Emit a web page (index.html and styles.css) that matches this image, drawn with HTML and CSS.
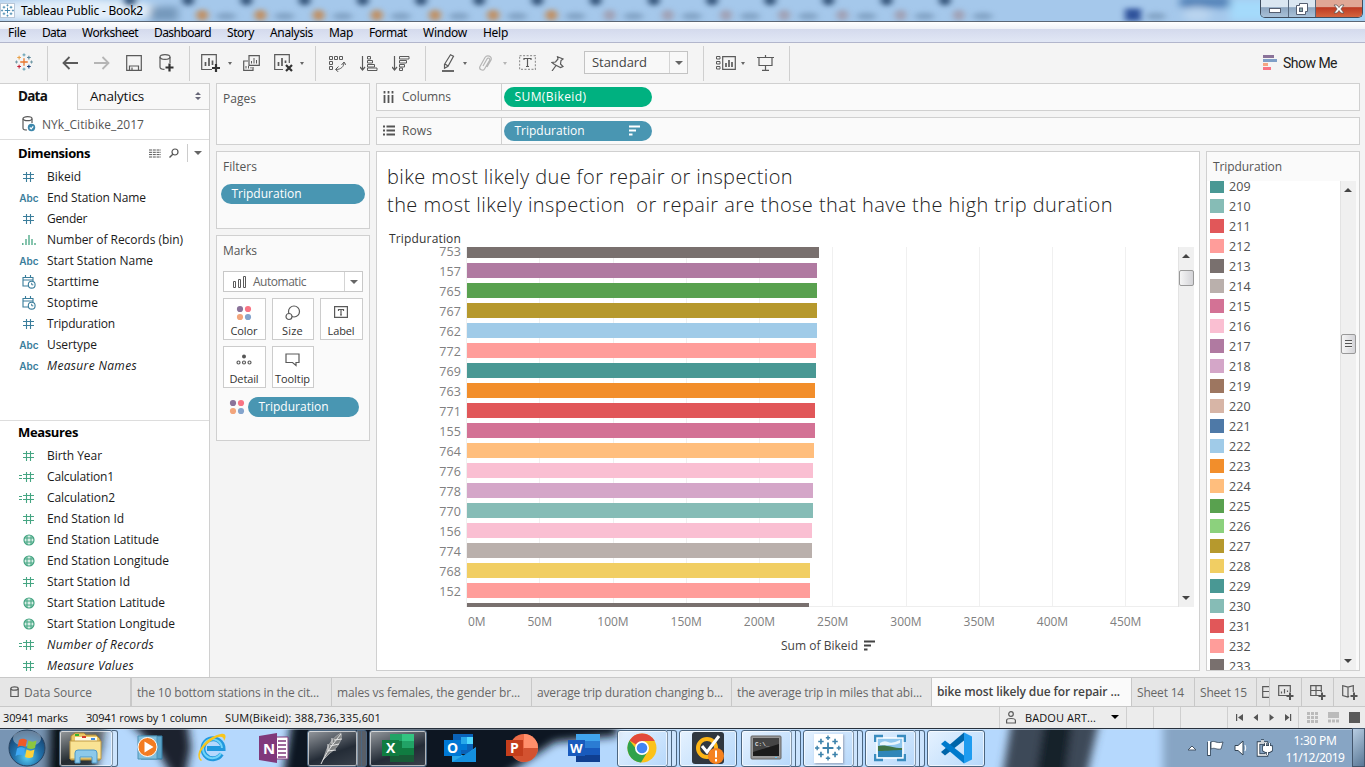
FILE: index.html
```html
<!DOCTYPE html>
<html lang="en">
<head>
<meta charset="utf-8">
<title>Tableau Public - Book2</title>
<link rel="stylesheet" href="styles.css">
</head>
<body>
<svg class="defs" width="0" height="0">
  <symbol id="plusmark" viewBox="0 0 24 24"><g fill="none">
    <path d="M12 7v10M7 12h10" stroke="var(--c1)" stroke-width="1.700"/>
    <path d="M5.500 3.500v5M3 6h5" stroke="var(--c2)" stroke-width="1.500"/><path d="M18.500 3.500v5M16 6h5" stroke="var(--c3)" stroke-width="1.500"/>
    <path d="M5.500 15.500v5M3 18h5" stroke="var(--c4)" stroke-width="1.500"/><path d="M18.500 15.500v5M16 18h5" stroke="var(--c5)" stroke-width="1.500"/>
    <path d="M12 .5v4M10 2.500h4M12 19.500v4M10 21.500h4" stroke="var(--c6)" stroke-width="1.300"/><path d="M2 10v4M0 12h4M22 10v4M20 12h4" stroke="var(--c7)" stroke-width="1.300"/>
  </g></symbol>
  <symbol id="hash" viewBox="0 0 12 12"><path d="M3.500 1v10M7.500 1v10M0 3.500h11M0 7.500h11" fill="none" stroke="currentColor" stroke-width="1.100"/></symbol>
  <symbol id="calc" viewBox="0 0 16 12"><path d="M7.500 1v10M11.500 1v10M4 3.500h11M4 7.500h11M0 4.500h3M0 7.500h3" fill="none" stroke="currentColor" stroke-width="1.100"/></symbol>
  <symbol id="bin" viewBox="0 0 14 12"><path d="M.8 9v2M4 5v6M7 1v10M10 5v6M13 9v2" fill="none" stroke="currentColor" stroke-width="1.300"/></symbol>
  <symbol id="cal" viewBox="0 0 14 14"><path d="M6 11H1V2.500h10V6M1 5h10M3.500 0v3M8.500 0v3" fill="none" stroke="currentColor" stroke-width="1.100"/><circle cx="9.700" cy="9.700" r="3.400" fill="#fff" stroke="currentColor" stroke-width="1.100"/><path d="M9.700 7.800v2h1.600" fill="none" stroke="currentColor"/></symbol>
  <symbol id="globe" viewBox="0 0 12 12"><circle cx="6" cy="6" r="5" fill="#d9eee6" stroke="currentColor" stroke-width="1.200"/><path d="M4 1.500v9M8 1.500v9M1 4h10M1 8h10" fill="none" stroke="currentColor"/></symbol>
  <symbol id="sortbars" viewBox="0 0 11 11"><path d="M0 1.500h11M0 5.500h7M0 9.500h3.500" stroke="currentColor" stroke-width="2"/></symbol>
  <symbol id="dots" viewBox="0 0 16 16"><circle cx="4" cy="4" r="3.100" fill="#8a7299"/><circle cx="12" cy="4" r="3.100" fill="#f87484"/><circle cx="4" cy="12" r="3.100" fill="#f2a57c"/><circle cx="12" cy="12" r="3.100" fill="#84a4cc"/></symbol>
</svg>

<header class="titlebar">
  <svg class="glass" viewBox="0 0 1365 22" preserveAspectRatio="none">
    <defs><filter id="soft" x="-20%" y="-50%" width="140%" height="200%"><feGaussianBlur stdDeviation="4"/></filter></defs>
    <rect width="1365" height="22" fill="#a5c8eb"/>
    <g filter="url(#soft)">
      <ellipse cx="70" cy="11" rx="95" ry="12" fill="#e3effa"/><rect x="150" y="7" width="28" height="15" fill="#7498bb"/>
      <rect x="1180" y="-4" width="50" height="12" fill="#5382b8"/><ellipse cx="1197" cy="15" rx="14" ry="8" fill="#b9d4ef"/>
      <rect x="1230" width="135" height="22" fill="#a4dafb"/>
    </g>
    <g id="tabsblur"></g>
  </svg>
  <div class="app-icon"><svg width="13" height="13"><use href="#plusmark"/></svg></div>
  <span class="app-title" data-w="122">Tableau Public - Book2</span>
  <div class="win-buttons">
    <span class="wb min"><svg width="12" height="5"><rect x=".5" y=".5" width="11" height="4" fill="#fff" stroke="#555e70"/></svg></span>
    <span class="wb max"><svg width="12" height="12"><path d="M3.500.5h8v8h-2v3h-9v-9h3z" fill="#fff" stroke="#555e70"/><rect x="3.500" y="5" width="3" height="3.500" fill="#8aa" stroke="#555e70"/></svg></span>
    <span class="wb close"><svg width="12" height="10"><path d="M1 1h3l2 2.500L8 1h3L7.800 5 11 9H8L6 6.500 4 9H1l3.200-4z" fill="#fff" stroke="#555" stroke-width=".7"/></svg></span>
  </div>
</header>

<nav class="menubar">
  <span data-w="18">File</span><span data-w="24">Data</span><span data-w="56">Worksheet</span><span data-w="57">Dashboard</span><span data-w="27">Story</span><span data-w="43">Analysis</span><span data-w="24">Map</span><span data-w="38">Format</span><span data-w="44">Window</span><span data-w="25">Help</span>
</nav>

<div class="toolbar">
  <div class="tg g1"><svg class="logo" width="18" height="18"><use href="#plusmark"/></svg></div>
  <div class="tg g2">
    <i><svg width="16" height="14" class="ln2"><path d="M1 7h15M7.500 1L1.500 7l6 6"/></svg></i>
    <i><svg width="16" height="14" class="ln2 dim"><path d="M0 7h15M8.500 1l6 6-6 6"/></svg></i>
    <i><svg width="16" height="16" class="ln"><path d="M.7.7h14.600v14.600H.7zM3.500 15v-4h9v4M6 15v-2.500"/></svg></i>
    <i><svg width="15" height="18" class="ln"><ellipse cx="6" cy="3" rx="5" ry="2.400"/><path d="M1 3v10c0 1.500 2 2.400 4.500 2.400M11 3v6"/><path class="heavy" d="M10.500 9.500v8M6.500 13.500h8"/></svg></i>
  </div>
  <div class="tg g3">
    <i class="w20"><svg width="19" height="18" class="ln"><path d="M11 15.500H.7V.7h14.600V10"/><path class="bars" d="M4.500 12V8M8 12V4M11.500 11V6.500"/><path class="heavy" d="M15 10v8M11 14h8"/></svg></i>
    <i class="w20 caret"></i>
    <i class="w22"><svg width="17" height="16" class="ln"><path d="M6 .7h10.300v9.600H6zM5 6H.7v9.300H10V12"/><path class="thin" d="M8.500 8.500V6M11 8.500V3M13.500 8.500V5M3 13.500V11M5.500 13.500V11M8 13.500v-1.500"/></svg></i>
    <i class="w22 ml10"><svg width="19" height="18" class="ln"><path d="M9 15.500H.7V.7h14.600V9"/><path class="bars" d="M4.500 12V8M8 12V4M11.500 9V6.500"/><path class="heavy" d="M12 11l6 6M18 11l-6 6"/></svg></i>
    <i class="w16 caret"></i>
  </div>
  <div class="tg g4">
    <i><svg width="17" height="17" class="ln"><path class="thin" d="M.5 1.500h3v3h-3zM5.500 1.500h3v3h-3zM10.500 1.500h3v3h-3zM.5 6.500h3v3h-3zM.5 11.500h3v3h-3zM7 14.500c5 0 8-3 8-7M9.500 11.500l-3 3 3 2.500M12.500 10L15 7l2 3"/></svg></i>
    <i><svg width="18" height="15" class="ln"><path d="M2.500 0v14M0 11l2.500 3L5 11"/><path class="thin" d="M7.500.5h3v2.500h-3zM7.500 4.500h5V7h-5zM7.500 8.500h7V11h-7zM7.500 12h9.500v2.500H7.500z"/></svg></i>
    <i><svg width="18" height="15" class="ln"><path d="M2.500 0v14M0 11l2.500 3L5 11"/><path class="thin" d="M7.500.5H17V3H7.500zM7.500 4.500h7V7h-7zM7.500 8.500h5V11h-5zM7.500 12h3v2.500h-3z"/></svg></i>
  </div>
  <div class="tg g5">
    <i class="w24"><svg width="13" height="18" class="ln"><path d="M8.500.8l3 1.500-5.500 10-3.500 2v-4zM3 10l3 2"/><path d="M0 17h12" stroke-width="1.800"/></svg></i>
    <i class="w10 caret"></i>
    <i class="w30"><svg width="13" height="16" class="ln dim"><path d="M4 11l4-7c1-1.800 3.500-.5 2.500 1.500l-5 8.500c-1.500 2.500-6 .5-4.500-2.500l5-9C8 -.5 13.500 1 12 5L8 12"/></svg></i>
    <i class="w10 caret dimc"></i>
    <i class="w34"><svg width="17" height="16" class="ln"><path d="M.6.6h15.800v13.800H.6z" stroke-dasharray="2 1.500" opacity=".6"/><path d="M5 5V3.500h7V5M8.500 3.500v8M7 11.500h3"/></svg></i>
    <i class="w26"><svg width="13" height="15" class="ln"><path d="M6.500.8l5.500 2.200-2 1.500-.5 3.500 2.500 2.500-2.500 1L3.500 8.500 1 6.500 4.500 6 7 3zM5 9.500L1 15"/></svg></i>
    <div class="combo"><span data-w="55">Standard</span><b class="caret big"></b></div>
  </div>
  <div class="tg g6">
    <i class="w24"><svg width="20" height="14" class="ln"><path class="thin" d="M.5.5h3.500V3H.5zM.5 5.500h3.500V8H.5zM.5 10.500h3.500V13H.5z"/><path d="M6.700.7h12.600v12.600H6.700z"/><path class="bars" d="M10 11V7M13 11V4M16 11V6"/></svg></i>
    <i class="w10 caret"></i>
    <i class="w35"><svg width="17" height="16" class="ln"><path d="M0 2.500h17M2 2.500v8h13v-8M8.500 0v2M8.500 11v4M5 15.300h7"/></svg></i>
  </div>
  <div class="showme"><svg width="14" height="15"><path d="M0 0h11v3H0z" fill="#8a7299"/><path d="M0 4h14v3H0z" fill="#7f9fc7"/><path d="M0 8h5v3H0z" fill="#f4a582"/><path d="M0 12h8v3H0z" fill="#f87484"/></svg><span data-w="54">Show Me</span></div>
</div>

<main class="workspace">
  <aside class="datapane">
    <div class="ptabs"><b data-w="29">Data</b><div class="ptab2"><span data-w="54">Analytics</span><svg width="6" height="8"><path d="M3 0l3 3H0zM3 8l3-3H0z" fill="#667"/></svg></div></div>
    <div class="source"><svg width="14" height="16" class="ln"><ellipse cx="5.500" cy="2.700" rx="4.500" ry="2"/><path d="M1 2.700v9.500c0 1 2 1.800 4 1.800M10 2.700V7"/><circle cx="9.500" cy="11.500" r="3.700" fill="#3d87ab" stroke="none"/><path d="M7.800 11.500l1.400 1.400 2-2.500" stroke="#fff"/></svg><span data-w="102">NYk_Citibike_2017</span></div>
    <section class="dims">
      <div class="phead"><b data-w="72">Dimensions</b>
        <svg class="grid-ic" width="12" height="9"><path d="M0 1h12M0 3.300h12M0 5.600h12M0 8h12" stroke="#555" stroke-dasharray="3 .8"/></svg>
        <svg class="find-ic" width="10" height="10" ><circle cx="6" cy="4" r="3" fill="none" stroke="#555" stroke-width="1.200"/><path d="M3.800 6.200L.5 9.500" stroke="#555" stroke-width="1.400"/></svg>
        <span class="hsep"></span><em class="caret big"></em></div>
      <div id="dims"></div>
    </section>
    <section class="meas"><div class="phead"><b data-w="60">Measures</b></div><div id="meas"></div></section>
  </aside>

  <div class="cards">
    <section class="card pages"><h3 data-w="33">Pages</h3></section>
    <section class="card filters"><h3 data-w="34">Filters</h3><div class="pill blue"><span data-w="70">Tripduration</span></div></section>
    <section class="card marks"><h3 data-w="34">Marks</h3>
      <div class="marktype"><svg width="14" height="12" class="ln"><path class="thin" d="M.5 5.500h2v6h-2zM5.500 3.500h2v8h-2zM10.500.5h2v11h-2z"/></svg><span data-w="53">Automatic</span><b class="caret big"></b></div>
      <div class="mgrid">
        <div><svg width="16" height="16"><use href="#dots"/></svg><span data-w="27">Color</span></div>
        <div><svg width="16" height="16" class="ln"><circle cx="9" cy="6.500" r="5.500"/><circle cx="4" cy="11.500" r="3" fill="#fafafa"/></svg><span data-w="21">Size</span></div>
        <div><svg width="14" height="14" class="ln"><path d="M.6 1.600h12.800v10.800H.6zM4.500 6V4.500h5V6M7 4.500v6M6 10h2"/></svg><span data-w="27">Label</span></div>
        <div><svg width="16" height="14" class="ln"><circle cx="8" cy="3.500" r="2" fill="#555" stroke="none"/><circle cx="2.500" cy="9.500" r="1.500"/><circle cx="8" cy="9.500" r="1.500"/><circle cx="13.500" cy="9.500" r="1.500"/></svg><span data-w="29">Detail</span></div>
        <div><svg width="16" height="14" class="ln"><path d="M1 1h13v8.500h-3v3l-3.500-3H1z"/></svg><span data-w="35">Tooltip</span></div>
      </div>
      <div class="encode"><svg width="16" height="16"><use href="#dots"/></svg><div class="pill blue"><span data-w="70">Tripduration</span></div></div>
    </section>
  </div>

  <div class="sheet">
    <div class="shelf"><div class="sname"><svg width="11" height="12"><path d="M1.500 0v2.500M1.500 4v8M5.500 0v2.500M5.500 4v8M9.500 0v2.500M9.500 4v8" stroke="#555" stroke-width="1.800"/></svg><span data-w="49">Columns</span></div><div class="pill green"><span data-w="72">SUM(Bikeid)</span></div></div>
    <div class="shelf"><div class="sname"><svg width="12" height="11"><path d="M0 1.500h2M3.500 1.500H12M0 5.500h2M3.500 5.500H12M0 9.500h2M3.500 9.500H12" stroke="#555" stroke-width="1.800"/></svg><span data-w="30">Rows</span></div><div class="pill blue"><span data-w="70">Tripduration</span><svg width="11" height="11"><use href="#sortbars"/></svg></div></div>
    <div class="views">
      <section class="viz">
        <h1><span data-w="406">bike most likely due for repair or inspection</span><span data-w="726">the most likely inspection&nbsp; or repair are those that have the high trip duration</span></h1>
        <div class="fieldname"><span data-w="72">Tripduration</span></div>
        <div class="plotwrap">
          <div class="plot"><div class="gridlines" id="grid"></div><div class="barrows" id="bars"></div></div>
          <div class="scroll"><s class="up"></s><u class="thumb t1"></u><s class="down"></s></div>
        </div>
        <div class="axis" id="axis"></div>
        <div class="axistitle"><span data-w="77">Sum of Bikeid</span><svg width="11" height="11"><use href="#sortbars"/></svg></div>
      </section>
      <section class="legend">
        <h3 data-w="69">Tripduration</h3>
        <div class="lwrap"><div class="llist" id="legend"></div><div class="scroll"><s class="up"></s><u class="thumb t2"></u><s class="down"></s></div></div>
      </section>
    </div>
  </div>
</main>

<div class="sheettabs">
  <div class="ds"><svg width="9" height="12" class="ln"><ellipse cx="4.500" cy="2.500" rx="3.700" ry="1.700"/><path d="M.8 2.500v8h7.400v-8"/></svg><span data-w="68">Data Source</span></div>
  <div class="t200"><span data-w="182">the 10 bottom stations in the cit...</span></div>
  <div class="t200"><span data-w="183">males vs females, the gender br...</span></div>
  <div class="t200"><span data-w="186">average trip duration changing b...</span></div>
  <div class="t200"><span data-w="185">the average trip in miles that abi...</span></div>
  <div class="t200 active"><span data-w="183">bike most likely due for repair ...</span></div>
  <div class="t63"><span data-w="47">Sheet 14</span></div>
  <div class="t62"><span data-w="47">Sheet 15</span></div>
  <div class="t13"><svg width="12" height="12" class="ln"><path d="M.7.7h11v10.600h-11zM.7 5.500h11"/></svg></div>
  <div class="t32"><svg width="16" height="15" class="ln"><path d="M10 10.500H.7V.7h11.600V7M3.500 8.500V6.500M6.500 8.500V4M9.500 7V5.500"/><path class="heavy2" d="M12 7.500V15M8.500 11h7"/></svg></div>
  <div class="t32"><svg width="16" height="15" class="ln"><path d="M9 10.500H.7V.7h10.600V7M6 .7v9.800M.7 5.500h10.600"/><path class="heavy2" d="M12 7.500V15M8.500 11h7"/></svg></div>
  <div class="t32 last"><svg width="16" height="15" class="ln"><path d="M7 11L6 12 .7 10.500V.7L6 2.200 11.300.7V7M6 2.200V12"/><path class="heavy2" d="M12 7.500V15M8.500 11h7"/></svg></div>
</div>

<div class="status">
  <div class="stext"><span data-w="65">30941 marks</span><span data-w="121">30941 rows by 1 column</span><span data-w="156">SUM(Bikeid): 388,736,335,601</span></div>
  <div class="user"><svg width="10" height="13" class="ln"><circle cx="5" cy="3" r="2.300"/><path d="M.6 12V9.500C.6 8 2 7.500 5 7.500s4.400.5 4.400 2V12z"/></svg><span data-w="71">BADOU ART...</span><b class="caret blk"></b></div>
  <div class="c27"></div><div class="c27"></div><div class="c47"></div>
  <div class="pager"><svg width="60" height="9" viewBox="0 0 60 9"><g fill="#555"><path d="M0 1h1.200v7H0zM7 1v7L2 4.500zM22 1v7l-4.500-3.500zM33.500 1v7L38 4.500zM49 1v7l4.500-3.500zM54 1h1.200v7H54z"/></g></svg></div>
  <div class="modes"><svg width="54" height="11"><path d="M0 1.500h11M0 5.500h11M0 9.500h11" stroke="#bbb" stroke-width="3" stroke-dasharray="3 1"/><path d="M21 0h11v6H21z" fill="#bbb"/><path d="M21 9h11" stroke="#bbb" stroke-width="3" stroke-dasharray="3 1"/><path d="M42 0h11v11H42z" fill="#595959"/></svg></div>
</div>

<footer class="taskbar">
  <svg class="glass" viewBox="0 0 1365 39" preserveAspectRatio="none">
    <defs><filter id="soft3" x="-5%" y="-50%" width="110%" height="200%"><feGaussianBlur stdDeviation="4"/></filter></defs>
    <rect width="1365" height="39" fill="#b5d8fd"/>
    <g filter="url(#soft3)">
      <path d="M-20-10h70v60h-70z" fill="#7895b4"/><path d="M48-10h60l-14 60H46z" fill="#10161f"/>
      <path d="M125-10h62l4 30-6 30h-12l-16-28z" fill="#1b232e"/><path d="M292-10h325v18l-62 6-60 40H282z" fill="#111820"/>
      <path d="M1012-10h88l-14 60h-84z" fill="#3d4958"/><path d="M1045-10h28l-8 60h-30z" fill="#18202b"/>
      <path d="M1163-10h220v60h-220z" fill="#87a5c4"/>
    </g>
    <path d="M0 .5h1365" stroke="#27303c"/><path d="M0 1.500h1365" stroke="#d5e6f7" opacity=".5"/>
  </svg>
  <div class="start"><svg width="38" height="38" viewBox="0 0 38 38"><defs><radialGradient id="orb" cx=".5" cy=".75" r=".7"><stop offset="0" stop-color="#57d0f5"/><stop offset=".5" stop-color="#2173ad"/><stop offset="1" stop-color="#16406c"/></radialGradient></defs><circle cx="19" cy="19" r="18" fill="url(#orb)" stroke="#27425f"/><ellipse cx="19" cy="9.500" rx="14" ry="8" fill="#fff" opacity=".35"/><path d="M11 11c3-2 5-1.500 8 0l-1.500 7c-3-1.700-5-1.500-8 0z" fill="#ef5a28"/><path d="M20.500 11.500c3 1.500 5 1.500 8 0L27 19c-3 1.500-5 1.200-8 0z" fill="#8cc63f"/><path d="M9 19.500c3-2 5-1.500 8 0L15.500 27c-3-1.700-5-1.500-8 0z" fill="#3fa9f5"/><path d="M18.500 20.500c3 1.500 5 1.500 8 0L25 28c-3 1.500-5 1.200-8 0z" fill="#fdd13a"/></svg></div>
  <div class="apps">
    <div class="app stk dark"><i><svg width="34" height="32" viewBox="0 0 34 32"><path d="M2 4l4-3h9l2 2h10l4 4v21H2z" fill="#e9c664" stroke="#a88432"/><path d="M6 5h22v8H6z" fill="#fffbe2"/><path d="M6 2h4v2H6z" fill="#35b52c"/><path d="M13 4h4v2h-4z" fill="#d83b2b"/><path d="M22 6h4v2h-4z" fill="#3f8de0"/><path d="M1 9h31v18H1z" fill="#f9e394" stroke="#c29c46"/><path d="M6 31V21q0-3 3-3h16q3 0 3 3v10h-5v-6H11v6z" fill="#8cc9ea" stroke="#4e99c8"/></svg></i></div>
    <div class="app"><svg width="30" height="28" viewBox="0 0 30 28"><path d="M6 2h21v23H6z" fill="#5ba3c9" stroke="#32789f"/><path d="M3 2h19v23H3z" fill="#83bfdc" stroke="#4e94b7"/><circle cx="12.500" cy="13" r="9.500" fill="#f37b21" stroke="#fff"/><path d="M9.500 7.500v11l9-5.500z" fill="#fff"/></svg></div>
    <div class="app"><svg width="32" height="30" viewBox="0 0 32 30"><path d="M25.500 21A10 10 0 1 1 27 15.500H11" fill="none" stroke="#2199de" stroke-width="5"/><path d="M25 20A9.500 9.500 0 1 1 26 15" fill="none" stroke="#71d3f8" stroke-width="2"/><path d="M5 28C-3 23 8 4 25 1c6-1 5 4 3 7 0-6-6-5-13 0C5 15 1 24 6 27z" fill="#f8c51c"/></svg></div>
    <div class="app"><svg width="30" height="30" viewBox="0 0 30 30"><path d="M17 4h12v22H17z" fill="#fff" stroke="#80397b"/><path d="M19 8h8M19 12h8M19 16h8M19 20h8M19 24h8" stroke="#80397b" stroke-width="1.500"/><path d="M0 3l18-3v30L0 27z" fill="#80397b"/><text x="4" y="21" class="lt" font-size="15">N</text></svg></div>
    <div class="app stk2 dark"><i><svg width="28" height="34" viewBox="0 0 28 34"><path d="M5 29C8 22 9 10 23 2c2 8-5 16-11 20z" fill="#7e8182" stroke="#c9caca" stroke-width=".6"/><path d="M3 33C8 22 14 14 23 3M9 20l9-1M12 15l9-2M16 9l8-1M10 19v-6M14 13V7" stroke="#e6e6e6" fill="none"/></svg></i></div>
    <div class="app full dark"><i><svg width="34" height="30" viewBox="0 0 34 30"><path d="M9 1h24v28H9z" fill="#21a366"/><path d="M9 8h12v14H9z" fill="#107c41"/><path d="M21 1h12v7H21z" fill="#33c481"/><path d="M21 15h12v7H21z" fill="#107c41"/><path d="M9 22h24v7H9z" fill="#185c37"/><path d="M1 7h17v16H1z" fill="#107c41"/><text x="5" y="20" class="lt" font-size="14">X</text></svg></i></div>
    <div class="app"><svg width="34" height="30" viewBox="0 0 34 30"><path d="M10 1h20v20H10z" fill="#0a62b8"/><path d="M18 4h6v7h-6z" fill="#28a8ea"/><path d="M24 4h6v7h-6z" fill="#50d9ff"/><path d="M18 11h6v6h-6z" fill="#0078d4"/><path d="M9 16l12 7 12-9v15H9z" fill="#28a8ea"/><path d="M9 29l24-14v14z" fill="#1490df"/><path d="M1 7h17v16H1z" fill="#0078d4"/><text x="4" y="20" class="lt" font-size="14">O</text></svg></div>
    <div class="app"><svg width="34" height="30" viewBox="0 0 34 30"><circle cx="19" cy="15" r="14" fill="#ed6c47"/><path d="M19 1a14 14 0 0 1 14 14H19z" fill="#ff8f6b"/><path d="M33 15a14 14 0 0 1-26 7l12-7z" fill="#d35230"/><path d="M1 7h17v16H1z" fill="#c43e1c"/><text x="5" y="20" class="lt" font-size="14">P</text></svg></div>
    <div class="app"><svg width="34" height="30" viewBox="0 0 34 30"><path d="M9 1h24v7H9z" fill="#41a5ee"/><path d="M9 8h24v7H9z" fill="#2b7cd3"/><path d="M9 15h24v7H9z" fill="#185abd"/><path d="M9 22h24v7H9z" fill="#103f91"/><path d="M1 7h17v16H1z" fill="#185abd"/><text x="3" y="20" class="lt" font-size="13">W</text></svg></div>
    <div class="app stk2"><i><svg width="30" height="30" viewBox="0 0 30 30"><circle cx="15" cy="15" r="14.500" fill="#fbc21a"/><path d="M15 15L2.500 7.500A14.500 14.500 0 0 1 27.700 8H15z" fill="#e24a3b"/><path d="M2.500 7.500A14.500 14.500 0 0 0 14 29.500L21 18l-6-3-5 2z" fill="#2fa24c"/><circle cx="15" cy="15" r="7" fill="#fff"/><circle cx="15" cy="15" r="5.300" fill="#4285f4"/></svg></i></div>
    <div class="app full"><i><svg width="32" height="32" viewBox="0 0 32 32"><rect width="32" height="32" rx="3" fill="#30373f"/><circle cx="15" cy="16" r="9" fill="none" stroke="#fdb515" stroke-width="4"/><path d="M10 14l5 6L27 4" fill="none" stroke="#fff" stroke-width="3"/><circle cx="24" cy="24" r="8" fill="#f58220"/><path d="M24 18.500v7M24 27v2.500" stroke="#fff" stroke-width="2"/></svg></i></div>
    <div class="app stk2"><i><svg width="32" height="26" viewBox="0 0 32 26"><rect x="1" y="1" width="30" height="23" rx="1" fill="#999" stroke="#666"/><path d="M3 3h26v18H3z" fill="#1b1b1b"/><path d="M3 3h26v6L3 17z" fill="#454545"/><text x="5" y="11" class="mono" font-size="6">C:\_</text><path d="M25 22.500h2" stroke="#57c8ff"/></svg></i></div>
    <div class="app stk2"><i><span class="tile"><svg width="26" height="26"><use href="#plusmark"/></svg></span></i></div>
    <div class="app stk2"><i><svg width="32" height="28" viewBox="0 0 32 28"><path d="M3 4h26v20H3z" fill="#8fc7ee" stroke="#fff" stroke-width="1.500"/><path d="M6 9q4-3 8-1t12-2v3q-6 3-20 2z" fill="#e8f5fd"/><path d="M4 16c8-3 14-1 24-2v9H4z" fill="#2f86b8"/><path d="M4 12c8-2 14 2 24 2v2c-8 0-14 1-24 1z" fill="#3f7446"/><path d="M1 8V2h8M23 2h8v6M31 20v6h-8M9 26H1v-6" fill="none" stroke="#3a8cbf" stroke-width="2.500"/></svg></i></div>
    <div class="app full"><i><svg width="32" height="32" viewBox="0 0 32 32"><path d="M24 .5v8L5 23.500 1 20z" fill="#0065a9"/><path d="M1 12l4-3.500 19 15v8z" fill="#007acc"/><path d="M24 .5l8 4v23l-8 4z" fill="#1f9cf0"/></svg></i></div>
  </div>
  <div class="tray">
    <svg width="90" height="20" viewBox="0 0 90 20"><path d="M2 12h8L6 8z" fill="#fff" stroke="#456"/><path d="M23 4v14" stroke="#345" stroke-width="3.500"/><path d="M23 3v14" stroke="#fff" stroke-width="2"/><path d="M25 4c4-2 5 2 12 0l-2 7c-5 1-6-2-10 0z" fill="#fff" stroke="#345" stroke-width=".8"/><path d="M49 7.500h3l5-4.500v14l-5-4.500h-3z" fill="#fff" stroke="#345"/><path d="M59 7q1.500 3 0 6" fill="none" stroke="#fff"/><g fill="none"><path d="M72.500 5h8v12h-8zM75 3h3" stroke="#345" stroke-width="3.500"/><path d="M72.500 5h8v12h-8zM75 3h3" stroke="#fff" stroke-width="1.700"/><path d="M77.500 8.500h8v4q-4 3-8 0zM79.500 5v3M83.500 5v3M81.500 14v3" fill="#fff" stroke="#345" stroke-width="2.500"/><path d="M77.500 8.500h8v4q-4 3-8 0zM79.500 5v3M83.500 5v3M81.500 14v3" fill="#fff" stroke="#fff"/></g></svg>
    <div class="clock"><span data-w="43">1:30 PM</span><span data-w="59">11/12/2019</span></div>
    <div class="peek"></div>
  </div>
</footer>
<script src="app.js"></script>
</body>
</html>
```
FILE: styles.css
```css
* { box-sizing: border-box; }
body { margin: 0; width: 1365px; height: 767px; overflow: hidden; display: flex; flex-direction: column; background: #f4f4f4; font: 12px "Open Sans", "Noto Sans", sans-serif; color: #222; }
span, b, h3, text { white-space: pre; }
i, em { font-style: normal; }
h1, h3 { margin: 0; font-weight: 400; font-size: 12px; }
svg { display: block; flex: none; }
.defs { position: absolute; }
.ln { fill: none; stroke: #5a5a5a; stroke-width: 1.2; }
.ln2 { fill: none; stroke: #5a5a5a; stroke-width: 1.8; }
.dim { stroke: #b5b5b5; }
.heavy { stroke: #333; stroke-width: 2.2; }
.heavy2 { stroke: #555; stroke-width: 2; }
.bars { stroke-width: 1.7; }
.thin { stroke-width: 1; }
.caret::after { content: ""; border: 2.500px solid transparent; border-top: 3px solid #666; border-bottom: 0; }
.caret.big::after { border-width: 4px 4px 0; }
.caret.blk::after { border-width: 4px 4px 0; border-top-color: #000; }
.caret.dimc::after { border-top-color: #b5b5b5; }

.titlebar { position: relative; height: 22px; display: flex; align-items: center; border-bottom: 1px solid #5a6675; overflow: hidden; flex: none; }
.glass { position: absolute; inset: 0; width: 100%; height: 100%; }
.glass .b { filter: blur(3px); }
.app-icon { position: relative; width: 15px; height: 15px; background: #fff; border: 1px solid #b8c7d8; display: grid; place-items: center; --c1: #3c82ab; --c2: #3c82ab; --c3: #3c82ab; --c4: #3c82ab; --c5: #3c82ab; --c6: #3c82ab; --c7: #3c82ab; }
.app-title { position: relative; margin-left: 6px; color: #000; font-family: "Noto Sans", sans-serif; }
.win-buttons { position: relative; display: flex; margin-left: auto; margin-right: 2px; height: 18px; align-self: flex-start; border: 1px solid #3f4d5f; border-top: 0; border-radius: 0 0 5px 5px; overflow: hidden; }
.wb { display: grid; place-items: center; background: linear-gradient(#dae6f1 40%, #8da6c0 45%, #a9c1d8); border-right: 1px solid #56677c; }
.min { width: 28px; padding-top: 4px; } .max { width: 27px; } .close { width: 46px; border: 0; background: linear-gradient(#e0a795 40%, #bd3b23 45%, #d5653e); }

.menubar { height: 21px; flex: none; display: flex; align-items: center; gap: 16px; padding-left: 8px; border-bottom: 1px solid #b2b6cc; background: linear-gradient(#fff, #eff2f8 33%, #d4daed 36%, #e1e7f5); color: #000; font-family: "Noto Sans", sans-serif; font-size: 12px; }
.toolbar { height: 40px; flex: none; display: flex; padding-top: 3px; background: #f4f4f4; }
.tg { height: 35px; display: flex; align-items: center; border-right: 1px solid #cfcfcf; padding-bottom: 1px; }
.tg i { display: flex; align-items: center; justify-content: center; width: 32px; flex: none; }
.g1 { width: 48px; justify-content: center; padding-bottom: 3px; } .g2 { width: 142px; padding-left: 6px; } .g3 { width: 126px; padding-left: 10px; } .g4 { width: 110px; padding-left: 5px; } .g5 { width: 278px; padding-left: 10px; } .g6 { width: 86px; padding-left: 10px; }
.tg .w10 { width: 10px; } .tg .w16 { width: 16px; } .tg .w20 { width: 20px; } .tg .w22 { width: 22px; } .tg .w24 { width: 24px; } .tg .w26 { width: 26px; } .tg .w30 { width: 30px; } .tg .w34 { width: 34px; } .tg .w35 { width: 35px; } .tg .ml10 { margin-left: 10px; }
.logo { --c1: #e8762c; --c2: #e8a14a; --c3: #5b879b; --c4: #c72037; --c5: #1f447e; --c6: #5b9aae; --c7: #7199a6; }
.combo { margin-left: 14px; width: 104px; height: 23px; border: 1px solid #c3c3c3; background: #f8f8f8; display: flex; align-items: center; padding-left: 7px; font-size: 13px; color: #444; margin-bottom: 1px; }
.combo span { padding-bottom: 1px; }
.combo b { margin-left: auto; width: 18px; height: 100%; border-left: 1px solid #d4d4d4; display: grid; place-items: center; }
.showme { margin-left: auto; width: 102px; display: flex; align-items: center; gap: 6px; font: 14px Roboto, sans-serif; padding-bottom: 4px; }

.workspace { height: 594px; flex: none; display: flex; gap: 6px; }
.datapane { width: 210px; height: 594px; background: #fff; border: solid #d0d0d0; border-width: 1px 1px 0 0; overflow: hidden; flex: none; }
.ptabs { display: flex; height: 26px; font-size: 13.500px; color: #111; }
.ptabs > b { width: 77px; padding-left: 18px; line-height: 25px; flex: none; }
.ptab2 { flex: 1; display: flex; align-items: center; justify-content: space-between; padding: 0 8px 2px 12px; border: solid #d0d0d0; border-width: 0 0 1px 1px; background: #f8f8f8; }
.source { height: 30px; display: flex; align-items: center; gap: 6px; padding: 0 0 1px 22px; border-bottom: 1px solid #ddd; color: #555; }
.dims { height: 281px; border-bottom: 1px solid #ddd; }
.phead { height: 26px; display: flex; align-items: center; padding-left: 18px; font-size: 13px; color: #000; }
.meas .phead { height: 24px; padding-bottom: 2px; }
.grid-ic { margin-left: 59px; } .find-ic { margin-left: 8px; } .hsep { width: 1px; height: 18px; background: #ccc; margin: 0 6px 0 8px; } .phead em { display: flex; }
.field { height: 21px; display: flex; align-items: center; color: #1a1a1a; }
.field .fi { width: 47px; display: flex; justify-content: center; padding-left: 11px; flex: none; color: #3a7d9b; }
.field.calc .fi { padding-left: 7px; }
.green-f .fi, .field.binf .fi { color: #45a582; }
.fi b { font: 600 10px Inter, sans-serif; padding-top: 1px; }
.it > span:last-child { font-style: italic; }

.cards { width: 154px; display: flex; flex-direction: column; gap: 6px; flex: none; }
.card { border: 1px solid #d0d0d0; background: #fafafa; }
.card h3 { color: #555; line-height: 17px; padding: 6px 0 0 6px; }
.pages { height: 62px; } .filters { height: 78px; } .marks { height: 206px; }
.pill { display: flex; align-items: center; height: 20px; border-radius: 10px; color: #fff; padding: 0 0 1px 10.500px; }
.pill span { font-weight: 500; }
.blue { background: #4996b2; } .green { background: #00b180; }
.filters .pill { margin: 9px 4px 0; }
.marktype { margin: 12px 6px 0; height: 21px; border: 1px solid #c8c8c8; display: flex; align-items: center; padding-left: 9px; color: #666; gap: 6px; background: #fff; }
.marktype b { margin-left: auto; border-left: 1px solid #d4d4d4; width: 18px; height: 100%; display: grid; place-items: center; }
.mgrid { margin: 6px; display: grid; grid-template-columns: 43px 42px 43px; gap: 6px; }
.mgrid div { height: 42px; border: 1px solid #ccc; background: #fff; display: flex; flex-direction: column; align-items: center; justify-content: space-between; padding: 6px 1px 1px 0; font-size: 11px; line-height: 14px; color: #333; }
.encode { display: flex; align-items: center; gap: 3px; padding: 3px 10px 0 12px; }
.encode .pill { flex: 1; }

.sheet { width: 984px; display: flex; flex-direction: column; gap: 6px; flex: none; }
.shelf { height: 28px; border: 1px solid #d0d0d0; background: #fafafa; display: flex; align-items: center; }
.sname { width: 125px; height: 26px; border-right: 1px solid #d0d0d0; display: flex; align-items: center; gap: 8px; padding: 0 0 1px 6px; color: #555; }
.shelf:nth-child(2) .sname { gap: 7px; }
.shelf .pill { width: 148px; margin-left: 2px; justify-content: space-between; padding-right: 12px; }
.views { display: flex; gap: 6px; height: 520px; }
.viz { width: 824px; border: 1px solid #d0d0d0; background: #fff; display: flex; flex-direction: column; }
.viz h1 { font-size: 20px; font-weight: 300; line-height: 28px; padding: 11px 0 0 10px; display: flex; flex-direction: column; align-items: flex-start; color: #222; height: 79px; }
.fieldname { height: 16px; line-height: 16px; padding-left: 12px; color: #333; }
.plotwrap { display: flex; height: 360px; }
.plot { position: relative; width: 801px; overflow: hidden; height: 360px; }
.gridlines { position: absolute; inset: 0 0 0 89px; display: flex; border-bottom: 1px solid #eee; }
.gridlines i { width: 73.25px; border-left: 1px solid #f0f0f0; flex: none; }
.barrows { position: relative; margin-top: -6px; }
.br { height: 20px; display: flex; line-height: 21px; }
.br span, .lg span { font-size: 12.500px; color: #808080; width: 90px; padding-right: 6px; text-align: right; letter-spacing: 0.1px; }
.br i { height: 15px; margin-top: 2px; }
.scroll { width: 16px; background: #f0f0f0; border-left: 1px solid #e3e3e3; display: flex; flex-direction: column; align-items: center; }
.scroll s { border: 4px solid transparent; margin-right: 1px; }
.scroll .up { border-bottom-color: #444; border-top: 0; margin-top: 7px; }
.scroll .down { border-top-color: #444; border-bottom: 0; margin-top: auto; margin-bottom: 7px; }
.thumb { width: 15px; margin-right: 1px; border: 1px solid #999; border-radius: 2px; background: linear-gradient(90deg, #f5f5f5, #d4d4d8); }
.t1 { height: 16px; margin-top: 12px; }
.t2 { height: 20px; margin-top: 142px; display: grid; place-items: center; text-decoration: none; }
.t2::after { content: ""; width: 7px; height: 8px; background: repeating-linear-gradient(#555 0 1px, #eee 1px 3px); }
.axis { display: flex; margin-left: 90px; height: 25px; color: #808080; font-size: 12px; align-items: center; padding-top: 4px; }
.axis span { width: 73.25px; margin-left: -37.100px; margin-right: 37.100px; text-align: center; flex: none; }
.axis span:first-child { width: 36.600px; margin-left: 1px; margin-right: 35.600px; text-align: left; }
.axistitle { display: flex; align-items: center; gap: 6px; padding: 0 0 0 404px; height: 26px; color: #444; }
.legend { width: 154px; border: 1px solid #d0d0d0; background: #fafafa; }
.legend h3 { height: 29px; line-height: 29px; padding-left: 6px; color: #555; }
.lwrap { display: flex; height: 489px; padding-right: 3px; }
.llist { flex: 1; background: #fff; overflow: hidden; padding-left: 3px; }
.lg { height: 20px; display: flex; align-items: center; }
.lg:first-child { margin-top: -5px; }
.lg i { width: 14px; height: 14px; }
.lg span { width: auto; padding: 0 0 0 5px; color: #505050; }

.sheettabs { height: 30px; flex: none; display: flex; border: solid #c8c8c8; border-width: 1px 0; background: #e6e6e6; color: #666; }
.sheettabs div { display: flex; align-items: center; border-right: 1px solid #c8c8c8; padding-left: 5px; flex: none; overflow: hidden; }
.sheettabs .ds { width: 132px; padding-left: 10px; gap: 5px; border-right-width: 2px; }
.t200 { width: 200px; } .t63 { width: 63px; } .t62 { width: 62px; } .t13 { width: 13px; } .t32 { width: 32px; }
.sheettabs .t32 { padding-left: 8px; } .sheettabs .active { background: #fafafa; color: #444; font-weight: 600; padding-bottom: 2px; } .sheettabs .last { border: 0; }
.status { height: 21px; flex: none; display: flex; background: #ececec; font-size: 11px; color: #111; }
.status > div { border-right: 1px solid #cfcfcf; display: flex; align-items: center; flex: none; }
.status .stext { width: 1000px; padding-left: 3px; gap: 18px; }
.status .user { width: 127px; padding: 0 0 1px 6px; gap: 9px; } .user b { display: flex; margin-left: 6px; }
.c27 { width: 27px; } .c47 { width: 47px; }
.status .pager { width: 71px; padding-left: 8px; } .status .modes { border: 0; padding-left: 8px; }

.taskbar { position: relative; height: 39px; flex: none; display: flex; overflow: hidden; }
.start { position: relative; width: 57px; padding: 1px 0 0 8px; flex: none; }
.apps { position: relative; display: flex; height: 39px; }
.app { width: 62px; display: flex; align-items: center; justify-content: center; padding-top: 1px; flex: none; }
.app > i { height: 37px; display: grid; place-items: center; border: 1px solid #4c6680; border-radius: 3px; background: linear-gradient(135deg, #f1f8ffcc, #b9d9f866); box-shadow: inset 0 0 0 1px #ffffffa0; }
.app.dark > i { background: linear-gradient(160deg, #ffffff90, #ffffff18 60%, #ffffff30); }
.full > i { width: 58px; }
.stk > i, .stk2 > i { position: relative; width: 51px; margin-right: 8px; }
.stk > i { width: 54px; margin-right: 5px; }
.stk > i::after, .stk2 > i::after { content: ""; position: absolute; top: -1px; bottom: -1px; left: 100%; width: 5px; border: 1px solid #4c6680; border-left: 0; border-radius: 0 3px 3px 0; background: #ffffff50; }
.stk2 > i::after { width: 9px; background: linear-gradient(90deg, #ffffff50 4px, #4c6680 4px 5px, #ffffff50 5px); }
.lt { font-family: "Open Sans", sans-serif; font-weight: 700; fill: #fff; }
.mono { font-family: "Liberation Mono", monospace; fill: #ddd; font-weight: 700; }
.tile { width: 29px; height: 29px; background: #fff; display: grid; place-items: center; box-shadow: 1px 1px 2px #7789; --c1: #3c82ab; --c2: #3c82ab; --c3: #3c82ab; --c4: #3c82ab; --c5: #3c82ab; --c6: #3c82ab; --c7: #3c82ab; }
.tray { position: relative; margin-left: auto; display: flex; align-items: center; width: 179px; }
.clock { width: 76px; display: flex; flex-direction: column; align-items: center; color: #fff; line-height: 17px; padding: 2px 0 0 2px; font-family: "Noto Sans", sans-serif; }
.peek { width: 13px; height: 39px; border: 1px solid #43566c; background: linear-gradient(135deg, #b7cde2, #5a7896); }
```
FILE: app.js
```js
const byId = id => document.getElementById(id);

const dimensions = [
  ["hash", "Bikeid", 34], ["abc", "End Station Name", 99], ["hash", "Gender", 40],
  ["bin", "Number of Records (bin)", 136], ["abc", "Start Station Name", 106],
  ["cal", "Starttime", 52], ["cal", "Stoptime", 51], ["hash", "Tripduration", 68],
  ["abc", "Usertype", 50], ["abc", "Measure Names", 90, "it"]
];
const measures = [
  ["hash", "Birth Year", 55], ["calc", "Calculation1", 67], ["calc", "Calculation2", 68],
  ["hash", "End Station Id", 77], ["globe", "End Station Latitude", 112],
  ["globe", "End Station Longitude", 122], ["hash", "Start Station Id", 83],
  ["globe", "Start Station Latitude", 118], ["globe", "Start Station Longitude", 128],
  ["calc", "Number of Records", 107, "it"], ["hash", "Measure Values", 87, "it"]
];
const iconSize = { hash: [12, 12], calc: [16, 12], bin: [14, 12], cal: [14, 14], globe: [12, 12] };

function field([icon, name, w, extra = ""], tone) {
  const glyph = icon === "abc" ? "<b>Abc</b>"
    : `<svg width="${iconSize[icon][0]}" height="${iconSize[icon][1]}"><use href="#${icon}"/></svg>`;
  const kind = icon === "calc" ? "calc" : icon === "bin" ? "binf" : "";
  return `<div class="field ${tone} ${extra} ${kind}"><span class="fi">${glyph}</span><span data-w="${w}">${name}</span></div>`;
}
byId("dims").innerHTML = dimensions.map(f => field(f, "")).join("");
byId("meas").innerHTML = measures.map(f => field(f, "green-f")).join("");

// label, bar length in pixels, colour
const bars = [
  [753, 352, "#79706e"], [157, 350, "#b07aa1"], [765, 350, "#59a14f"], [767, 350, "#b6992d"],
  [762, 350, "#a0cbe8"], [772, 349, "#ff9d9a"], [769, 349, "#499894"], [763, 348, "#f28e2b"],
  [771, 348, "#e15759"], [155, 348, "#d37295"], [764, 347, "#ffbe7d"], [776, 346, "#fabfd2"],
  [778, 346, "#d4a6c8"], [770, 346, "#86bcb6"], [156, 345, "#fabfd2"], [774, 345, "#bab0ac"],
  [768, 343, "#f1ce63"], [152, 343, "#ff9d9a"], [773, 342, "#79706e"]
];
byId("bars").innerHTML = bars.map(([n, w, c]) =>
  `<div class="br"><span>${n}</span><i style="width:${w}px;background:${c}"></i></div>`).join("");
byId("grid").innerHTML = "<i></i>".repeat(10);
byId("axis").innerHTML = Array.from({ length: 10 }, (_, k) => `<span>${k * 50}M</span>`).join("");

const palette = ["#499894", "#86bcb6", "#e15759", "#ff9d9a", "#79706e", "#bab0ac", "#d37295", "#fabfd2",
  "#b07aa1", "#d4a6c8", "#9d7660", "#d7b5a6", "#4e79a7", "#a0cbe8", "#f28e2b", "#ffbe7d",
  "#59a14f", "#8cd17d", "#b6992d", "#f1ce63"];
byId("legend").innerHTML = Array.from({ length: 25 }, (_, k) =>
  `<div class="lg"><i style="background:${palette[k % 20]}"></i><span>${209 + k}</span></div>`).join("");

// blurred browser tabs seen through the glass title bar
let blur = "";
for (let k = 0; k < 15; k++) {
  const x = 130 + k * 58.2;
  blur += `<circle class="b" cx="${x}" cy="0" r="6" fill="#35557a"/>`;
  if (k > 0) {
    blur += `<circle class="b" cx="${x + 14}" cy="16" r="6" fill="${k < 8 ? "#c08f62" : "#a0a1b5"}"/>`
      + `<ellipse class="b" cx="${x + 38}" cy="17" rx="10" ry="4" fill="#83a4c6"/>`;
  }
}
blur += `<rect class="b" x="1125" y="9" width="16" height="13" fill="#2f529b"/><ellipse class="b" cx="1156" cy="17" rx="10" ry="4" fill="#83a4c6"/>`;
byId("tabsblur").innerHTML = blur;

// track each label to its design width
document.querySelectorAll("[data-w]").forEach(el => {
  const range = document.createRange();
  range.selectNodeContents(el);
  const natural = range.getBoundingClientRect().width;
  el.style.letterSpacing = (el.dataset.w - natural) / el.textContent.length + "px";
});
```
